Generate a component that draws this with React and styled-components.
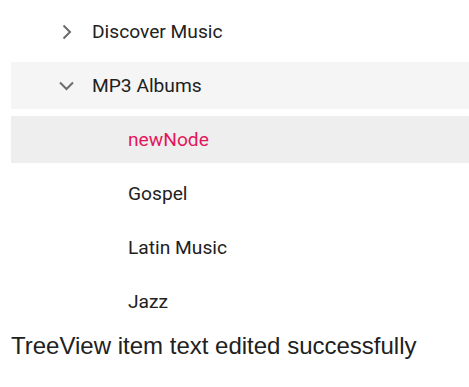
import React from 'react'
import styled, { createGlobalStyle } from 'styled-components'

const GlobalStyle = createGlobalStyle`
  body {
    margin: 0;
    background: #fff;
  }
`;

const Page = styled.div`
  padding: 8px 0 0 11px;
`;

const Tree = styled.ul`
  list-style: none;
  margin: 0;
  padding: 0;
  display: flex;
  flex-direction: column;
  gap: 7px;
`;

const Row = styled.li`
  height: 47px;
  display: flex;
  align-items: center;
  padding-left: ${p => (p.$level === 1 ? 117 : 51)}px;
  background: ${p => p.$bg || 'transparent'};
  font-family: Roboto, "Noto Sans", sans-serif;
  font-size: 19.2px;
  color: ${p => (p.$active ? '#e3165b' : '#212121')};
`;

const Toggle = styled.span`
  width: 30px;
  height: 20px;
  display: flex;
  align-items: center;
  color: #6b6b6b;
`;

const Status = styled.p`
  margin: 7px 0 0;
  font-family: "Liberation Sans", Arial, sans-serif;
  font-size: 24px;
  color: #212121;
`;

const ChevronRight = () => (
  <svg width="16" height="16" viewBox="0 0 16 16">
    <path d="M1.5 1.5 L8 8 L1.5 14.5" fill="none" stroke="currentColor" strokeWidth="2" />
  </svg>
);

const ChevronDown = () => (
  <svg width="16" height="12" viewBox="0 0 16 12" style={{ marginLeft: -3 }}>
    <path d="M1 2.5 L7.5 9 L14 2.5" fill="none" stroke="currentColor" strokeWidth="2" />
  </svg>
);

const children = ['newNode', 'Gospel', 'Latin Music', 'Jazz'];

export default function App() {
  return (
    <Page>
      <GlobalStyle />
      <Tree>
        <Row>
          <Toggle><ChevronRight /></Toggle>
          Discover Music
        </Row>
        <Row $bg="#f5f5f5">
          <Toggle><ChevronDown /></Toggle>
          MP3 Albums
        </Row>
        {children.map((name, i) => (
          <Row key={name} $level={1} $active={i === 0} $bg={i === 0 ? '#eeeeee' : undefined}>
            {name}
          </Row>
        ))}
      </Tree>
      <Status>TreeView item text edited successfully</Status>
    </Page>
  );
}
